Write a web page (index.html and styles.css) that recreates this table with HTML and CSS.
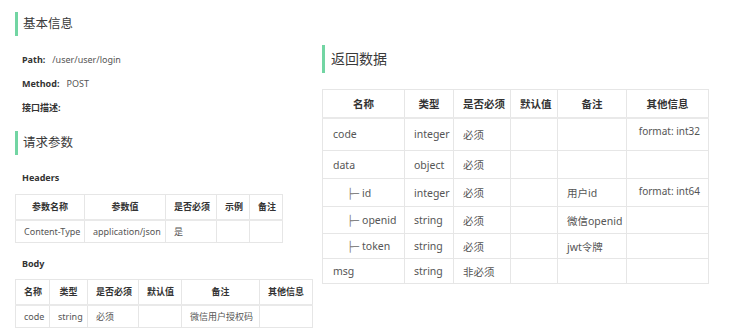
FILE: index.html
```html
<!DOCTYPE html>
<html lang="zh">
<head>
<meta charset="utf-8">
<link rel="stylesheet" href="styles.css">
</head>
<body>
<div class="page">
  <div class="left">
    <h2 class="sec-title">基本信息</h2>
    <div class="kv-list">
      <div class="kv"><span class="k">Path:</span><span class="v">/user/user/login</span></div>
      <div class="kv"><span class="k">Method:</span><span class="v">POST</span></div>
      <div class="kv"><span class="k">接口描述:</span></div>
    </div>
    <h2 class="sec-title sec-title-2">请求参数</h2>
    <div class="sub-label sub-headers">Headers</div>
    <table class="tbl tbl-headers">
      <colgroup>
        <col class="hc1"><col class="hc2"><col class="hc3"><col class="hc4"><col class="hc5">
      </colgroup>
      <thead>
        <tr class="lh"><th>参数名称</th><th>参数值</th><th>是否必须</th><th>示例</th><th>备注</th></tr>
      </thead>
      <tbody>
        <tr class="lr"><td>Content-Type</td><td>application/json</td><td>是</td><td></td><td></td></tr>
      </tbody>
    </table>
    <div class="sub-label sub-body">Body</div>
    <table class="tbl tbl-body">
      <colgroup>
        <col class="bc1"><col class="bc2"><col class="bc3"><col class="bc4"><col class="bc5"><col class="bc6">
      </colgroup>
      <thead>
        <tr class="lh"><th>名称</th><th>类型</th><th>是否必须</th><th>默认值</th><th>备注</th><th>其他信息</th></tr>
      </thead>
      <tbody>
        <tr class="lr"><td>code</td><td>string</td><td>必须</td><td></td><td class="center">微信用户授权码</td><td></td></tr>
      </tbody>
    </table>
  </div>
  <div class="right">
    <h2 class="sec-title sec-title-r">返回数据</h2>
    <table class="tbl tbl-resp">
      <colgroup>
        <col class="rc1"><col class="rc2"><col class="rc3"><col class="rc4"><col class="rc5"><col class="rc6">
      </colgroup>
      <thead>
        <tr class="rh"><th>名称</th><th>类型</th><th>是否必须</th><th>默认值</th><th>备注</th><th>其他信息</th></tr>
      </thead>
      <tbody>
        <tr class="r32"><td>code</td><td>integer</td><td>必须</td><td></td><td></td><td class="fmt">format: int32</td></tr>
        <tr class="r28"><td>data</td><td>object</td><td>必须</td><td></td><td></td><td></td></tr>
        <tr class="r28"><td class="child"><span class="tree">├─</span>id</td><td>integer</td><td>必须</td><td></td><td>用户id</td><td class="fmt">format: int64</td></tr>
        <tr class="r27"><td class="child"><span class="tree">├─</span>openid</td><td>string</td><td>必须</td><td></td><td>微信openid</td><td></td></tr>
        <tr class="r25"><td class="child"><span class="tree">├─</span>token</td><td>string</td><td>必须</td><td></td><td>jwt令牌</td><td></td></tr>
        <tr class="r25"><td>msg</td><td>string</td><td>非必须</td><td></td><td></td><td></td></tr>
      </tbody>
    </table>
  </div>
</div>
</body>
</html>
```
FILE: styles.css
```css
* { box-sizing: border-box; }
html, body { margin: 0; padding: 0; background: #fff; }
body {
  font-family: "Noto Sans", "Noto Sans CJK SC", sans-serif;
  color: #555;
  width: 748px;
  height: 336px;
  overflow: hidden;
}
.page {
  display: flex;
  align-items: flex-start;
  padding-left: 15px;
}
.left { width: 297px; padding-top: 12px; }
.right { width: 387px; margin-left: 10px; padding-top: 45px; }

.sec-title {
  margin: 0;
  height: 24px;
  line-height: 24px;
  border-left: 3px solid #72d5a3;
  padding-left: 5px;
  font-size: 12.5px;
  font-weight: normal;
  color: #3a3a3a;
}
.sec-title-2 { margin-top: 11px; }
.sec-title-r {
  height: 28px;
  line-height: 28px;
  font-size: 14px;
  padding-left: 6px;
}

.kv-list { margin-top: 12px; padding-left: 7px; }
.kv { height: 24px; line-height: 24px; font-size: 9px; }
.k { font-weight: bold; color: #333; margin-right: 7px; }
.v { color: #555; }

.sub-label {
  height: 18px;
  line-height: 18px;
  padding-left: 7px;
  font-size: 9px;
  font-weight: bold;
  color: #333;
}
.sub-headers { margin-top: 14px; }
.sub-body { margin-top: 12px; }

.tbl {
  border-collapse: collapse;
  table-layout: fixed;
  font-size: 9px;
  color: #555;
}
.tbl th, .tbl td {
  border: 1px solid #e6e6e6;
  padding: 0 8px;
  white-space: nowrap;
  overflow: hidden;
}
.tbl th {
  font-weight: bold;
  color: #333;
  text-align: center;
  border-bottom: 2px solid #e9e9e9;
}
.tbl td { text-align: left; }
.tbl td.center { text-align: center; }

.tbl-headers { width: 267px; margin-top: 7px; }
.tbl-body { width: 297px; margin-top: 6px; }

.hc1 { width: 69px; } .hc2 { width: 81px; } .hc3 { width: 51px; } .hc4 { width: 33px; } .hc5 { width: 33px; }
.bc1 { width: 34px; } .bc2 { width: 38px; } .bc3 { width: 51px; } .bc4 { width: 43px; } .bc5 { width: 78px; } .bc6 { width: 53px; }

.lh { height: 25px; }
.lr { height: 23px; }

.tbl-resp { width: 386px; margin-top: 16px; font-size: 10.5px; }
.tbl-resp th, .tbl-resp td { padding: 0 9px; }
.tbl-resp td:first-child { padding-left: 10px; }
.rc1 { width: 82px; } .rc2 { width: 49px; } .rc3 { width: 57px; } .rc4 { width: 47px; } .rc5 { width: 69px; } .rc6 { width: 82px; }

.rh { height: 28px; }
.r32 { height: 33px; }
.r28 { height: 28px; }
.r27 { height: 27px; }
.r25 { height: 25px; }

.tbl-resp td.child { padding-left: 24px; }
.tree {
  font-family: "DejaVu Sans Mono", "Liberation Mono", monospace;
  font-size: 10px;
  color: #777;
  margin-right: 3px;
}
.tbl-resp td.fmt {
  vertical-align: top;
  padding-top: 5px;
  padding-right: 8px;
  text-align: right;
  font-size: 10px;
}
```
